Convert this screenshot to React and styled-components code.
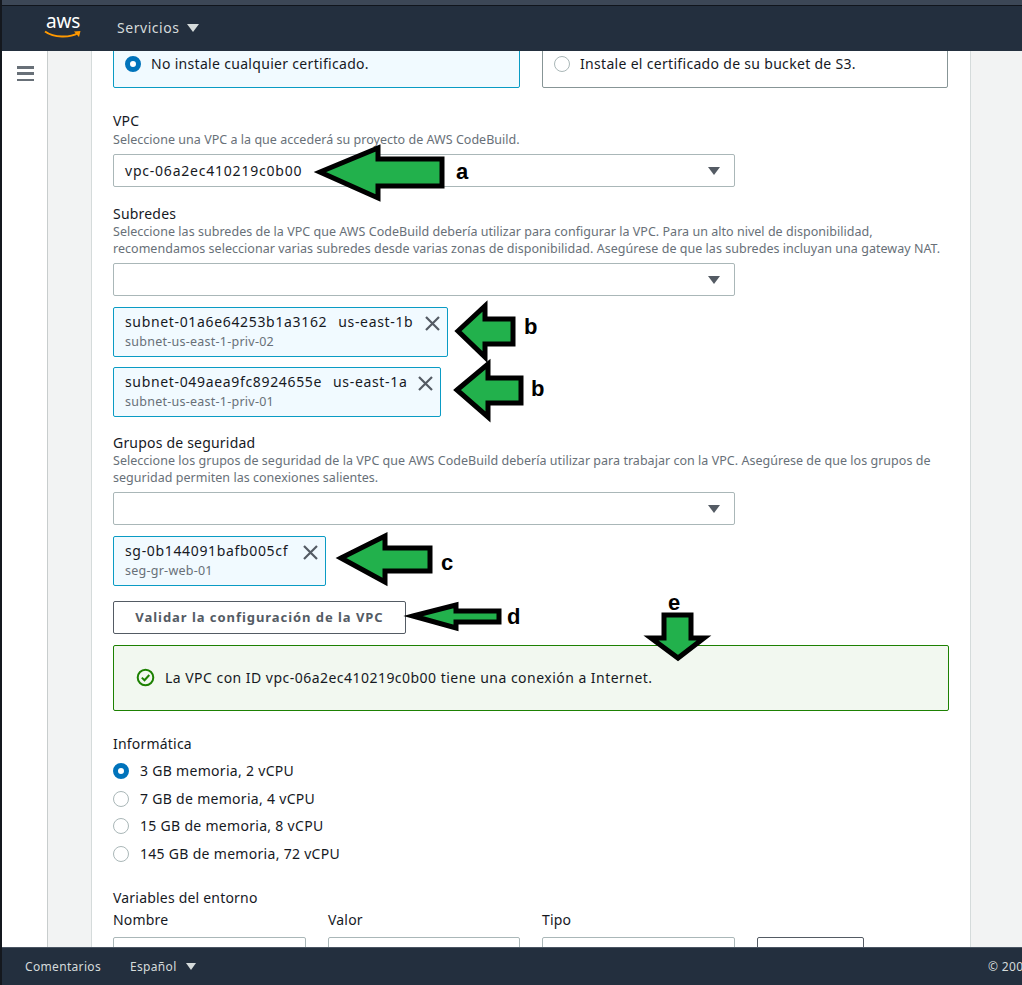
import React from "react";
import styled, { createGlobalStyle } from "styled-components";

const Global = createGlobalStyle`
  html, body { margin: 0; padding: 0; background: #fff; }
  * { box-sizing: border-box; }
  body { font-family: "Noto Sans", "Open Sans", sans-serif; color: #16191f; }
`;

const Page = styled.div`
  position: relative; width: 1022px; height: 985px; overflow: hidden;
  display: flex; flex-direction: column; border-left: 2px solid #14181e;
`;
const TopStrip = styled.div`height: 6px; flex: none; background: #3c4756; border-bottom: 1px solid #10151c;`;
const Header = styled.header`
  height: 45px; flex: none; background: #232f3e; display: flex; align-items: center; padding-left: 42px; color: #d5dbdb;
`;
const Logo = styled.div`width: 38px; height: 30px; position: relative; margin-right: 35px; color: #fff;
  display: flex; flex-direction: column; align-items: center; margin-top: -3px;`;
const LogoText = styled.span`font-size: 19px; line-height: 18px; height: 18px; letter-spacing: -.2px;`;
const NavButton = styled.div`display: flex; align-items: center; gap: 7px; font-size: 14px; letter-spacing: .55px; margin-top: -2px;`;
const Caret = styled.span`
  width: 0; height: 0; display: inline-block; flex: none;
  border-left: ${p => p.$s}px solid transparent; border-right: ${p => p.$s}px solid transparent;
  border-top: ${p => p.$s + 2}px solid ${p => p.$c};
`;
const Main = styled.main`flex: 1; min-height: 0; display: flex; overflow: hidden; background: #f2f3f3;`;
const Side = styled.aside`width: 46px; flex: none; background: #fff; border-right: 1px solid #c8cdcd; padding: 15px 0 0 15px;`;
const Burger = styled.div`
  width: 17px; height: 15px; display: flex; flex-direction: column; justify-content: space-between;
  & > i { display: block; height: 2.5px; background: #687078; }
`;
const Gutter = styled.div`flex: 1; padding: 0 51px 0 43px; min-width: 0;`;
const Card = styled.section`
  display: flow-root; background: #fff; height: 100%; padding: 0 21px; width: 880px;
  border-left: 1px solid #d5dbdb; border-right: 1px solid #d5dbdb;
`;
const Tiles = styled.div`display: grid; grid-template-columns: 407px 406px; column-gap: 22px; margin-top: -12px;`;
const Tile = styled.div`
  height: 49px; border: 1px solid ${p => p.$on ? "#0a9bc4" : "#879596"}; border-radius: 2px;
  background: ${p => p.$on ? "#f1faff" : "#fff"}; display: flex; align-items: center; gap: 10px;
  padding-left: 11px; font-size: 14px; letter-spacing: .31px;
`;
const Radio = styled.span`
  width: 16px; height: 16px; border-radius: 50%; flex: none; background: #fff;
  border: ${p => p.$on ? "5px solid #0073bb" : "1px solid #aab7b8"};
`;
const Field = styled.div`margin-top: ${p => p.$mt}px;`;
const Label = styled.div`font-size: 14px; line-height: 19px; letter-spacing: .2px;`;
const Hint = styled.div`font-size: 12.5px; line-height: 17px; color: #687078; letter-spacing: .03px; width: 835px; margin-top: ${p => p.$mt ?? 0}px;`;
const Select = styled.div`
  width: 622px; height: 33px; margin-top: ${p => p.$mt ?? 6}px; border: 1px solid #aab7b8; border-radius: 2px;
  display: flex; align-items: center; justify-content: space-between; padding: 0 14px 0 11px;
  font-size: 14px; letter-spacing: .78px;
`;
const Token = styled.div`
  width: ${p => p.$w}px; height: 50px; margin-top: ${p => p.$mt ?? 10}px; background: #f1faff; border: 1px solid #0a9bc4; border-radius: 2px;
  padding: 4px 6px 0 11px; display: flex; justify-content: space-between; align-items: flex-start;
`;
const TokenBody = styled.div`display: flex; flex-direction: column; min-width: 0;`;
const TokenTitle = styled.div`display: flex; gap: 11px; font-size: 14px; line-height: 20px; letter-spacing: .66px; white-space: nowrap;`;
const TokenSub = styled.div`font-size: 12.5px; line-height: 17px; color: #687078; margin-top: 1px; letter-spacing: .25px;`;
const Close = styled.svg`width: 17px; height: 17px; flex: none; margin-top: 3px;`;
const Button = styled.div`
  height: 33px; width: ${p => p.$w}px; margin-top: ${p => p.$mt ?? 0}px; border: 1px solid #545b64; border-radius: 2px; display: flex; align-items: center; justify-content: center;
  font-size: 13px; font-weight: 700; color: #545b64; letter-spacing: .95px; flex: none; padding-bottom: 2px;
`;
const Success = styled.div`
  height: 66px; margin-top: 11px; background: #f2f8f0; border: 1px solid #1d8102; border-radius: 2px;
  display: flex; align-items: center; gap: 10px; padding: 0 0 2px 22px; font-size: 14px; letter-spacing: .47px;
`;
const Options = styled.div`margin-top: 8px; display: flex; flex-direction: column; gap: 7.5px;`;
const Option = styled.div`display: flex; align-items: center; gap: 11px; font-size: 14px; line-height: 20px; letter-spacing: .3px;`;
const EnvGrid = styled.div`display: grid; grid-template-columns: 193px 192px 193px 107px; column-gap: 22px; margin-top: 3px;`;
const EnvCol = styled.div`display: flex; flex-direction: column; gap: 8px;`;
const EnvInput = styled.div`height: 33px; border: 1px solid ${p => p.$dark ? "#545b64" : "#aab7b8"}; border-radius: 2px;`;
const Footer = styled.footer`
  height: 38px; flex: none; background: #232f3e; border-top: 1px solid #4a5563; display: flex; align-items: center;
  padding-left: 23px; font-size: 12px; color: #d5dbdb; letter-spacing: .33px;
`;
const FootLink = styled.span`margin-right: 29px; display: flex; align-items: center; gap: 9px;`;
const Copy = styled.span`margin-left: auto; width: 34px; overflow: hidden; white-space: nowrap; flex: none;`;
const Overlay = styled.svg`position: absolute; left: -2px; top: 0; width: 1022px; height: 985px; pointer-events: none;`;
const Letter = styled.span`
  position: absolute; left: ${p => p.$x}px; top: ${p => p.$y}px; font: 700 22px/24px "Liberation Sans", sans-serif; color: #000;
`;

const X = () => (
  <Close viewBox="0 0 17 17"><path d="M2 2 L15 15 M15 2 L2 15" stroke="#545b64" strokeWidth="2.2" fill="none" /></Close>
);
const Sel = ({ children, mt }) => (
  <Select $mt={mt}><span>{children}</span><Caret $s={6} $c="#545b64" /></Select>
);
const Tok = ({ w, mt, title, zone, sub }) => (
  <Token $w={w} $mt={mt}>
    <TokenBody>
      <TokenTitle><span>{title}</span>{zone && <span>{zone}</span>}</TokenTitle>
      <TokenSub>{sub}</TokenSub>
    </TokenBody>
    <X />
  </Token>
);

const arrows = [
  "320,172 378,148 378,159 442,159 442,186 378,186 378,198",
  "458,331 485,306 485,319 513,319 513,344 485,344 485,357",
  "457,390 488,364 488,378 521,378 521,403 488,403 488,417",
  "341,558 385,536 385,548 430,548 430,571 385,571 385,582",
  "413,616 456,605 456,611 499,611 499,622 456,622 456,628",
  "664,615 691,615 691,638 704,638 678,658 651,638 664,638",
];

export default function App() {
  return (
    <Page>
      <Global />
      <TopStrip />
      <Header>
        <Logo>
          <LogoText>aws</LogoText>
          <svg width="38" height="10" viewBox="0 0 38 10">
            <path d="M1 1.5 C10 8 26 8 34 3" stroke="#ff9900" strokeWidth="2" fill="none" />
            <path d="M30 1.5 L36.5 1 L35 7 Z" fill="#ff9900" />
          </svg>
        </Logo>
        <NavButton>Servicios <Caret $s={6.5} $c="#d5dbdb" /></NavButton>
      </Header>
      <Main>
        <Side><Burger><i /><i /><i /></Burger></Side>
        <Gutter>
          <Card>
            <Tiles>
              <Tile $on><Radio $on />No instale cualquier certificado.</Tile>
              <Tile><Radio />Instale el certificado de su bucket de S3.</Tile>
            </Tiles>
            <Field $mt={23}>
              <Label>VPC</Label>
              <Hint $mt={1}>Seleccione una VPC a la que accederá su proyecto de AWS CodeBuild.</Hint>
              <Sel>vpc-06a2ec410219c0b00</Sel>
            </Field>
            <Field $mt={17}>
              <Label>Subredes</Label>
              <Hint>Seleccione las subredes de la VPC que AWS CodeBuild debería utilizar para configurar la VPC. Para un alto nivel de disponibilidad, recomendamos seleccionar varias subredes desde varias zonas de disponibilidad. Asegúrese de que las subredes incluyan una gateway NAT.</Hint>
              <Sel mt={6} />
              <Tok w={335} mt={11} title="subnet-01a6e64253b1a3162" zone="us-east-1b" sub="subnet-us-east-1-priv-02" />
              <Tok w={328} title="subnet-049aea9fc8924655e" zone="us-east-1a" sub="subnet-us-east-1-priv-01" />
            </Field>
            <Field $mt={16}>
              <Label>Grupos de seguridad</Label>
              <Hint>Seleccione los grupos de seguridad de la VPC que AWS CodeBuild debería utilizar para trabajar con la VPC. Asegúrese de que los grupos de seguridad permiten las conexiones salientes.</Hint>
              <Sel mt={6} />
              <Tok w={213} mt={11} title="sg-0b144091bafb005cf" sub="seg-gr-web-01" />
            </Field>
            <Button $w={293} $mt={15}>Validar la configuración de la VPC</Button>
            <Success>
              <svg width="19" height="19" viewBox="0 0 19 19">
                <circle cx="9.5" cy="9.5" r="7.8" stroke="#1d8102" strokeWidth="2" fill="none" />
                <path d="M5.8 9.6 L8.5 12.2 L13.3 7" stroke="#1d8102" strokeWidth="2" fill="none" />
              </svg>
              La VPC con ID vpc-06a2ec410219c0b00 tiene una conexión a Internet.
            </Success>
            <Field $mt={23}>
              <Label>Informática</Label>
              <Options>
                <Option><Radio $on />3 GB memoria, 2 vCPU</Option>
                <Option><Radio />7 GB de memoria, 4 vCPU</Option>
                <Option><Radio />15 GB de memoria, 8 vCPU</Option>
                <Option><Radio />145 GB de memoria, 72 vCPU</Option>
              </Options>
            </Field>
            <Field $mt={24}>
              <Label>Variables del entorno</Label>
              <EnvGrid>
                <EnvCol><Label>Nombre</Label><EnvInput /></EnvCol>
                <EnvCol><Label>Valor</Label><EnvInput /></EnvCol>
                <EnvCol><Label>Tipo</Label><EnvInput /></EnvCol>
                <EnvCol><Label>&nbsp;</Label><EnvInput $dark /></EnvCol>
              </EnvGrid>
            </Field>
          </Card>
        </Gutter>
      </Main>
      <Footer>
        <FootLink>Comentarios</FootLink>
        <FootLink>Español <Caret $s={5} $c="#d5dbdb" /></FootLink>
        <Copy>© 2008 - 2021</Copy>
      </Footer>
      <Overlay viewBox="0 0 1022 985">
        {arrows.map(a => (
          <polygon key={a} points={a} fill="#22b14c" stroke="#000" strokeWidth="5" strokeLinejoin="miter" />
        ))}
      </Overlay>
      <Letter $x={454} $y={160}>a</Letter>
      <Letter $x={522} $y={315}>b</Letter>
      <Letter $x={529} $y={377}>b</Letter>
      <Letter $x={439} $y={551}>c</Letter>
      <Letter $x={505} $y={605}>d</Letter>
      <Letter $x={666} $y={591}>e</Letter>
    </Page>
  );
}
